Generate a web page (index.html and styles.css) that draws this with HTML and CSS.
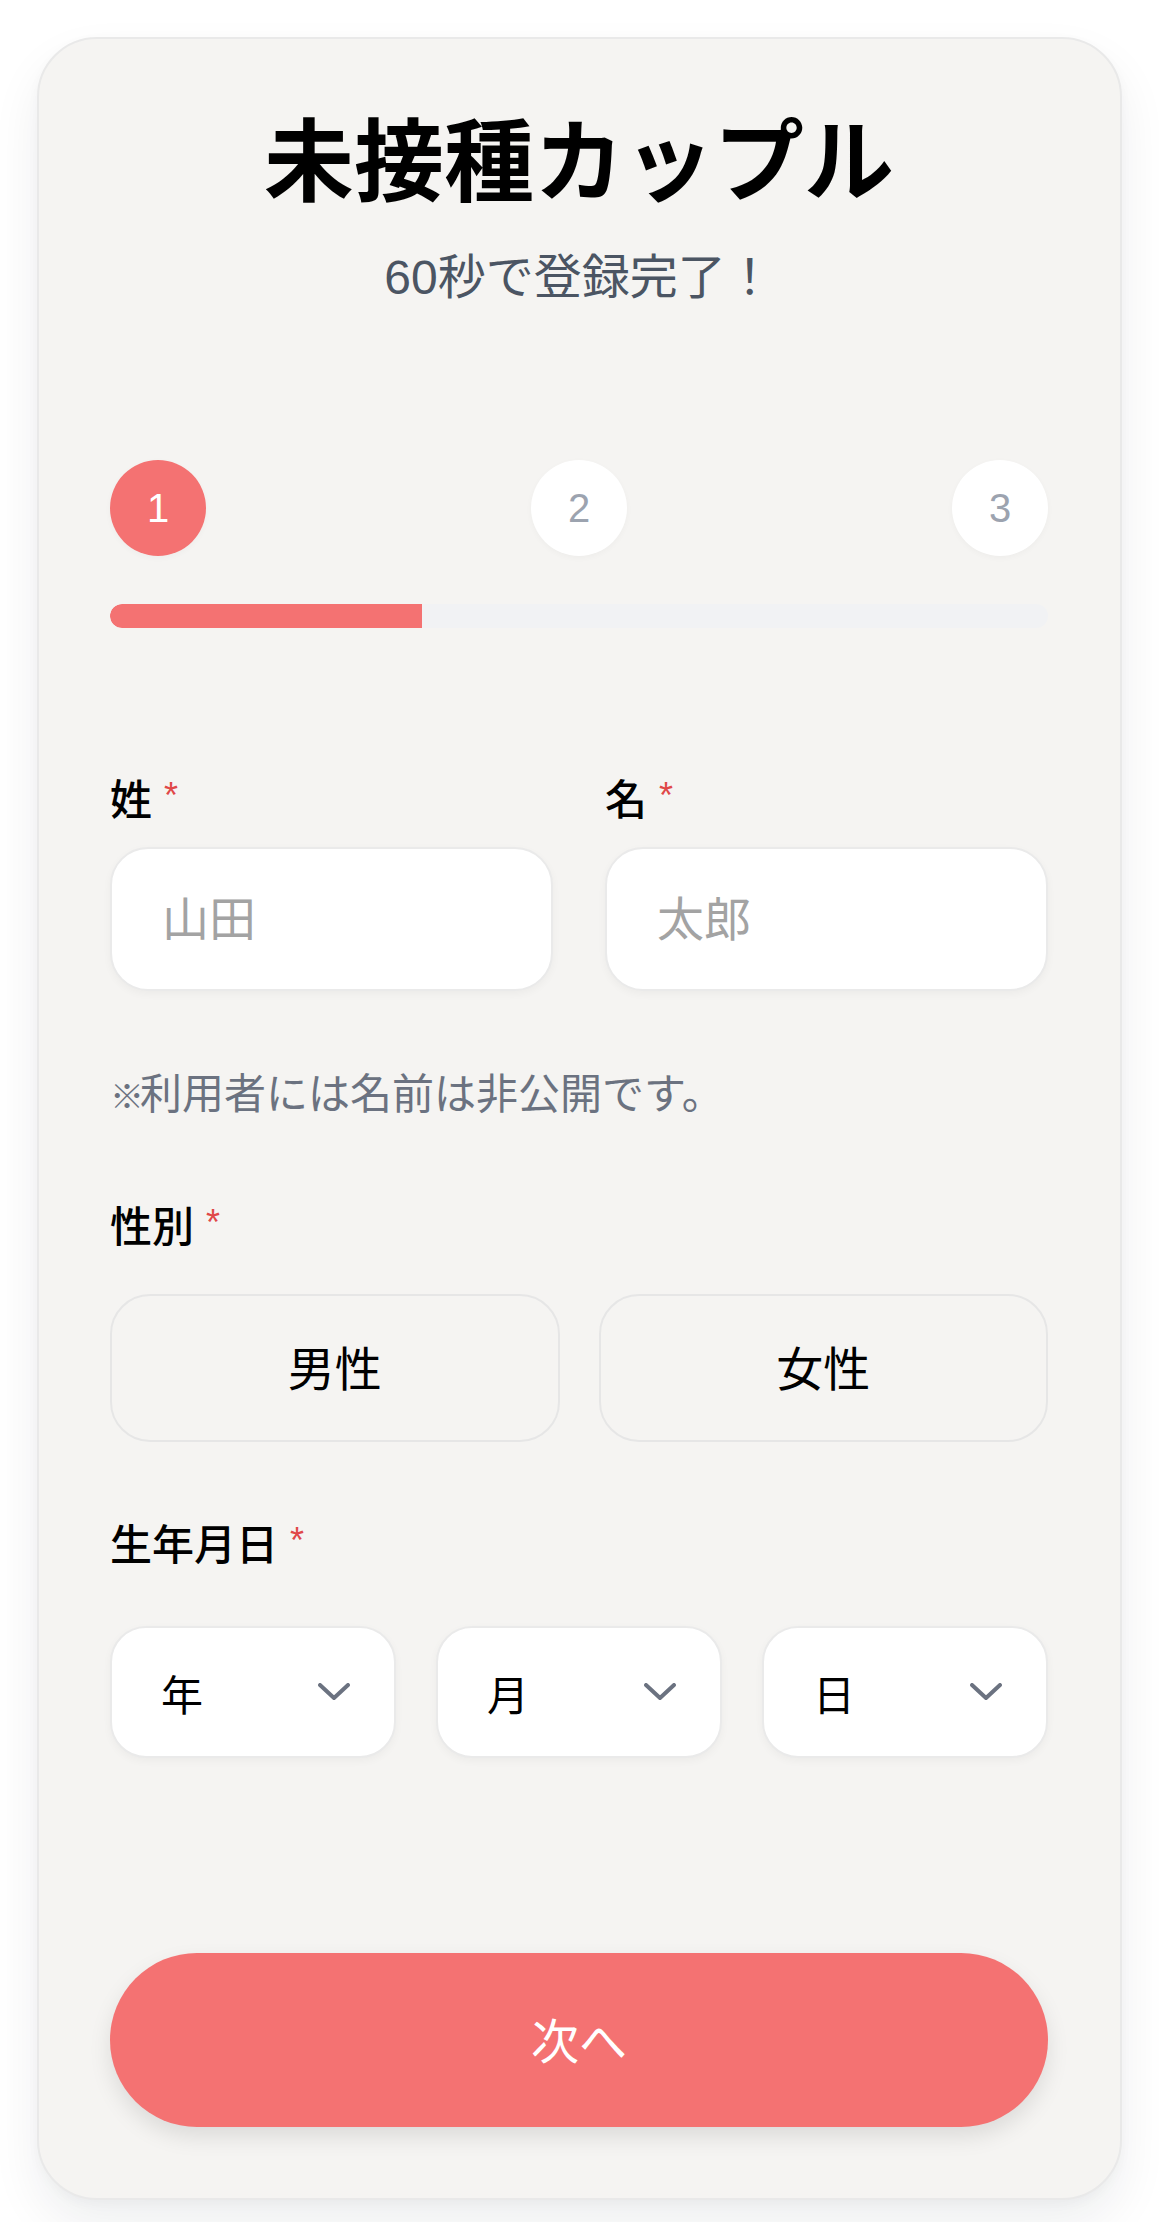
FILE: index.html
```html
<!DOCTYPE html>
<html lang="ja">
<head>
<meta charset="utf-8">
<title>未接種カップル</title>
<link rel="stylesheet" href="styles.css">
</head>
<body>
<div class="page">
  <main class="card">
    <h1 class="title">未接種カップル</h1>
    <p class="subtitle">60秒で登録完了！</p>

    <div class="steps">
      <div class="step active">1</div>
      <div class="step">2</div>
      <div class="step">3</div>
    </div>
    <div class="progress"><div class="progress-fill" style="width:33.3%"></div></div>

    <div class="name-grid">
      <div class="field">
        <label class="label">姓<span class="req">*</span></label>
        <input class="input" type="text" placeholder="山田">
      </div>
      <div class="field">
        <label class="label">名<span class="req">*</span></label>
        <input class="input" type="text" placeholder="太郎">
      </div>
    </div>

    <p class="note"><span class="kome">※</span>利用者には名前は非公開です。</p>

    <div class="label gender-label">性別<span class="req">*</span></div>
    <div class="gender-grid">
      <button class="gender-btn" type="button">男性</button>
      <button class="gender-btn" type="button">女性</button>
    </div>

    <div class="label dob-label">生年月日<span class="req">*</span></div>
    <div class="dob-grid">
      <div class="select"><span>年</span><svg class="chev" viewBox="0 0 32 18" width="32" height="18"><polyline points="2,2 16,15 30,2" fill="none" stroke="#6b7280" stroke-width="4" stroke-linecap="round" stroke-linejoin="round"/></svg></div>
      <div class="select"><span>月</span><svg class="chev" viewBox="0 0 32 18" width="32" height="18"><polyline points="2,2 16,15 30,2" fill="none" stroke="#6b7280" stroke-width="4" stroke-linecap="round" stroke-linejoin="round"/></svg></div>
      <div class="select"><span>日</span><svg class="chev" viewBox="0 0 32 18" width="32" height="18"><polyline points="2,2 16,15 30,2" fill="none" stroke="#6b7280" stroke-width="4" stroke-linecap="round" stroke-linejoin="round"/></svg></div>
    </div>

    <button class="next-btn" type="button">次へ</button>
  </main>
</div>
</body>
</html>
```
FILE: styles.css
```css
* { box-sizing: border-box; }

body {
  margin: 0;
  background: #ffffff;
  font-family: "Liberation Sans", "Noto Sans CJK JP", sans-serif;
  color: #111111;
}

.page {
  padding: 37px 37px 22px;
}

.card {
  background: #f5f4f2;
  border: 2px solid #e9e9e9;
  border-radius: 60px;
  padding: 70px 72px 71px 71px;
  box-shadow: 0 24px 50px rgba(17, 24, 39, 0.07), 0 4px 12px rgba(17, 24, 39, 0.03);
  display: flex;
  flex-direction: column;
}

.title {
  margin: 0;
  font-size: 90px;
  line-height: 108px;
  font-weight: 700;
  text-align: center;
  color: #000000;
}

.subtitle {
  margin: 27px 0 0;
  font-size: 48px;
  line-height: 67px;
  text-align: center;
  color: #4b5563;
}

.steps {
  margin-top: 149px;
  display: flex;
  justify-content: space-between;
}

.step {
  width: 96px;
  height: 96px;
  border-radius: 50%;
  background: #ffffff;
  color: #9ca3af;
  font-size: 40px;
  display: flex;
  align-items: center;
  justify-content: center;
  box-shadow: 0 2px 6px rgba(0, 0, 0, 0.03);
}

.step.active {
  background: #f47272;
  color: #ffffff;
}

.progress {
  margin-top: 48px;
  height: 24px;
  border-radius: 12px;
  background: #f1f2f4;
  overflow: hidden;
}

.progress-fill {
  height: 100%;
  background: #f47272;
  border-radius: 12px 0 0 12px;
}

.name-grid {
  margin-top: 142px;
  display: grid;
  grid-template-columns: 1fr 1fr;
  column-gap: 52px;
}

.field {
  display: flex;
  flex-direction: column;
}

.label {
  display: block;
  font-size: 42px;
  line-height: 62px;
  height: 62px;
  font-weight: 500;
  color: #000000;
  margin-bottom: 15px;
}

.req {
  color: #e04848;
  font-size: 36px;
  line-height: 1;
  margin-left: 12px;
  vertical-align: top;
  position: relative;
  top: 8px;
}

.input {
  width: 100%;
  height: 144px;
  border: 2px solid #eaeaea;
  border-radius: 38px;
  background: #ffffff;
  padding: 0 0 0 50px;
  font-family: inherit;
  font-size: 47px;
  color: #111111;
  outline: none;
  box-shadow: 0 3px 8px rgba(0, 0, 0, 0.04);
}

.input::placeholder {
  color: #a3a3a3;
}

.note {
  margin: 73px 0 0;
  font-size: 42px;
  line-height: 62px;
  height: 62px;
  color: #6b7280;
}

.kome {
  font-size: 34px;
  line-height: 1;
  margin-right: -4px;
}

.gender-label {
  margin-top: 71px;
  margin-bottom: 35px;
}

.gender-grid {
  display: grid;
  grid-template-columns: 1fr 1fr;
  column-gap: 39px;
}

.gender-btn {
  height: 148px;
  border: 2px solid #e6e6e6;
  border-radius: 40px;
  background: transparent;
  font-family: inherit;
  font-size: 47px;
  color: #000000;
  padding: 0 0 6px;
}

.dob-label {
  margin-top: 73px;
  margin-bottom: 49px;
}

.dob-grid {
  display: grid;
  grid-template-columns: repeat(3, 1fr);
  column-gap: 40px;
}

.select {
  height: 132px;
  border: 2px solid #eaeaea;
  border-radius: 36px;
  background: #ffffff;
  display: flex;
  align-items: center;
  justify-content: space-between;
  padding: 0 44px 0 49px;
  font-size: 42px;
  color: #000000;
  box-shadow: 0 3px 8px rgba(0, 0, 0, 0.04);
}

.chev {
  display: block;
}

.next-btn {
  margin-top: 195px;
  height: 174px;
  border: none;
  border-radius: 87px;
  background: #f47272;
  color: #ffffff;
  font-family: inherit;
  font-size: 48px;
  padding: 0 0 4px;
  box-shadow: 0 10px 22px rgba(0, 0, 0, 0.1);
}
```
